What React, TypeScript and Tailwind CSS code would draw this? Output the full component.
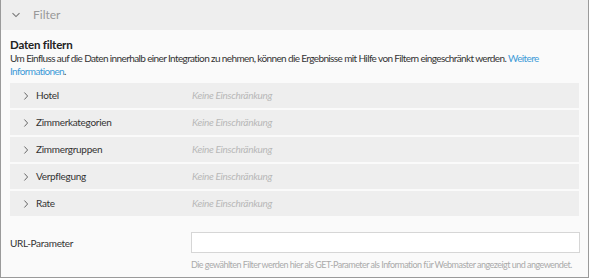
import React from 'react';

const rows = ['Hotel', 'Zimmerkategorien', 'Zimmergruppen', 'Verpflegung', 'Rate'];

const Chevron: React.FC<{ down?: boolean }> = ({ down }) => (
  <svg width="8" height="8" viewBox="0 0 8 8" className="shrink-0">
    {down ? (
      <path d="M0.5 2.2 L4 5.6 L7.5 2.2" fill="none" stroke="#777" strokeWidth="1.1" />
    ) : (
      <path d="M2.4 0.5 L5.6 4 L2.4 7.5" fill="none" stroke="#666" strokeWidth="1" />
    )}
  </svg>
);

const App: React.FC = () => {
  return (
    <div className="w-[590px] h-[279px] bg-white font-['Lato',sans-serif] text-[#333]">
      <div className="w-[589px] h-[278px] border border-t-0 border-[#9a9a9a] bg-[#fafafa] flex flex-col">
        <div className="h-[30px] bg-[#eeeeee] flex items-center pl-[11px] gap-[13px] shrink-0">
          <Chevron down />
          <span className="text-[12px] text-[#999]">Filter</span>
        </div>

        <div className="px-[9px] pt-[8px]">
          <h2 className="text-[11.5px] font-bold text-[#222] leading-[14px] tracking-[-0.2px]">Daten filtern</h2>
          <p className="text-[10px] leading-[13px] text-[#333] tracking-[-0.62px]">
            Um Einfluss auf die Daten innerhalb einer Integration zu nehmen, können die Ergebnisse mit Hilfe von Filtern eingeschränkt werden.{' '}
            <a className="text-[#3d9ad8]">Weitere Informationen</a>.
          </p>

          <div className="mt-[5px] flex flex-col gap-[2px] w-[569px]">
            {rows.map((r) => (
              <div key={r} className="h-[25px] bg-[#eeeeee] flex items-center pl-[12px] text-[10px] tracking-[-0.3px]">
                <Chevron />
                <span className="ml-[6px] w-[156px] text-[#333]">{r}</span>
                <span className="italic text-[#b8b8b8]">Keine Einschränkung</span>
              </div>
            ))}
          </div>

          <div className="mt-[16px] flex w-[570px]">
            <div className="w-[181px] shrink-0 pt-[4px] text-[10px] text-[#333] tracking-[-0.3px]">URL-Parameter</div>
            <div className="flex-1 min-w-0">
              <input className="block w-full h-[21px] bg-white border border-[#d6d6d6] outline-none" />
              <p className="mt-[5px] text-[9px] text-[#aaa] tracking-[-0.53px] whitespace-nowrap">
                Die gewählten Filter werden hier als GET-Parameter als Information für Webmaster angezeigt und angewendet.
              </p>
            </div>
          </div>
        </div>
      </div>
    </div>
  );
};

export default App;
